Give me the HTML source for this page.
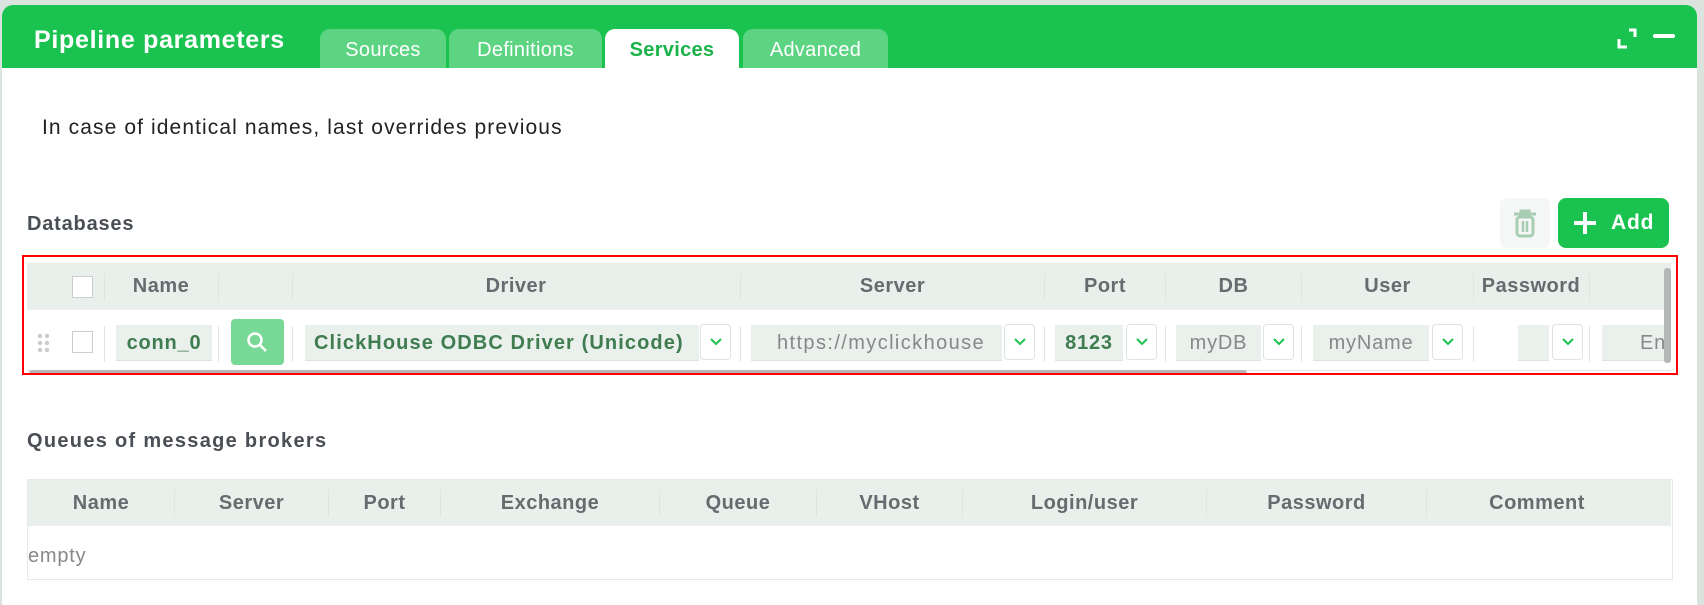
<!DOCTYPE html>
<html><head><meta charset="utf-8"><style>
*{box-sizing:border-box;margin:0;padding:0}
body{width:1704px;height:600px;background:#dbe3de;font-family:"Liberation Sans",sans-serif;position:relative;overflow:hidden;letter-spacing:0.8px}
.a{position:absolute}
#panel{left:2px;top:5px;width:1695px;height:600px;background:#fff;border-radius:11px 11px 0 0;overflow:hidden}
#hdr{left:0;top:0;width:1695px;height:63px;background:#1ac350}
.tab{top:24px;height:39px;background:#5cd482;color:#fff;font-size:20px;text-align:center;line-height:42px;border-radius:10px 10px 0 0;letter-spacing:0.3px}
.tab.on{background:#fff;color:#1ab34a;font-weight:bold}
.th{color:#666b70;font-weight:bold;font-size:20px;text-align:center;top:0;height:47px;line-height:47px;letter-spacing:0.5px}
.sep{width:1px;background:#dfe5e1}
.inp{background:#eaf0ec;height:36px;line-height:36px;font-size:20px;border-bottom:1px solid #dde4df}
.dd{width:31px;height:36px;border:1px solid #dde4df;border-radius:4px;background:#fff}
.dd svg{position:absolute;left:9px;top:12px}
.cb{width:21px;height:22px;border:1px solid #c9cfcc;background:#fff}
.q{color:#666b70;font-weight:bold;font-size:20px;top:0;height:46px;line-height:46px;text-align:center;letter-spacing:0.5px}
</style></head><body>
<div id="panel" class="a">
<div id="hdr" class="a">
 <div class="a" style="left:32px;top:21px;color:#fff;font-weight:bold;font-size:25px;letter-spacing:0.7px">Pipeline parameters</div>
 <div class="a tab" style="left:318px;width:126px">Sources</div>
 <div class="a tab" style="left:447px;width:153px">Definitions</div>
 <div class="a tab on" style="left:603px;width:134px">Services</div>
 <div class="a tab" style="left:741px;width:145px">Advanced</div>
 <svg class="a" style="left:1614px;top:22px" width="24" height="24" viewBox="0 0 24 24"><path d="M3 12v8h8M13 3h6v7" fill="none" stroke="#fff" stroke-width="3"/></svg>
 <div class="a" style="left:1651px;top:29px;width:22px;height:4px;background:#fff;border-radius:2px"></div>
</div>
<div class="a" style="left:40px;top:111px;font-size:21px;color:#222;letter-spacing:1.1px">In case of identical names, last overrides previous</div>
<div class="a" style="left:25px;top:208px;font-size:20px;font-weight:bold;color:#4a4f55">Databases</div>
<div class="a" style="left:1498px;top:193px;width:50px;height:50px;background:#f4f7f5;border-radius:7px">
 <svg class="a" style="left:12px;top:10px" width="26" height="30" viewBox="0 0 26 30"><path d="M2 6h22M9 6V3h8v3" stroke="#a7cdb2" stroke-width="3" fill="none"/><rect x="5" y="9" width="16" height="19" rx="3" fill="none" stroke="#a7cdb2" stroke-width="3"/><path d="M11 13v11M15 13v11" stroke="#a7cdb2" stroke-width="2.5"/></svg>
</div>
<div class="a" style="left:1556px;top:193px;width:111px;height:50px;background:#1ac350;border-radius:8px;color:#fff;font-weight:bold;font-size:21px;line-height:50px">
 <svg class="a" style="left:15px;top:13px" width="24" height="24"><path d="M12 1v22M1 12h22" stroke="#fff" stroke-width="4"/></svg>
 <span class="a" style="left:53px;top:0">Add</span>
</div>
<div class="a" style="left:20px;top:250px;width:1656px;height:120px;border:2px solid #f00"></div>
<div class="a" style="left:25px;top:258px;width:1644px;height:110px;overflow:hidden">
 <div class="a" style="left:0;top:0;width:1644px;height:47px;background:#e9f0eb"></div>
 <div class="a cb" style="left:45px;top:13px"></div>
 <div class="a sep" style="left:77px;top:10px;height:28px"></div>
 <div class="a th" style="left:78px;width:112px">Name</div>
 <div class="a sep" style="left:191px;top:10px;height:28px"></div>
 <div class="a sep" style="left:265px;top:10px;height:28px"></div>
 <div class="a th" style="left:266px;width:446px">Driver</div>
 <div class="a sep" style="left:713px;top:10px;height:28px"></div>
 <div class="a th" style="left:714px;width:303px">Server</div>
 <div class="a sep" style="left:1017px;top:10px;height:28px"></div>
 <div class="a th" style="left:1018px;width:120px">Port</div>
 <div class="a sep" style="left:1138px;top:10px;height:28px"></div>
 <div class="a th" style="left:1139px;width:135px">DB</div>
 <div class="a sep" style="left:1274px;top:10px;height:28px"></div>
 <div class="a th" style="left:1275px;width:171px">User</div>
 <div class="a sep" style="left:1446px;top:10px;height:28px"></div>
 <div class="a th" style="left:1447px;width:114px">Password</div>
 <div class="a sep" style="left:1562px;top:10px;height:28px"></div>
 <svg class="a" style="left:10px;top:70px" width="14" height="20"><g fill="#c9ceca"><circle cx="3" cy="3" r="2.2"/><circle cx="10" cy="3" r="2.2"/><circle cx="3" cy="10" r="2.2"/><circle cx="10" cy="10" r="2.2"/><circle cx="3" cy="17" r="2.2"/><circle cx="10" cy="17" r="2.2"/></g></svg>
 <div class="a cb" style="left:45px;top:68px"></div>
 <div class="a sep" style="left:77px;top:63px;height:36px"></div>
 <div class="a inp" style="left:89px;top:62px;width:96px;color:#3f7d50;font-weight:bold;text-align:center">conn_0</div>
 <div class="a sep" style="left:191px;top:63px;height:36px"></div>
 <div class="a" style="left:204px;top:56px;width:53px;height:46px;background:#78d996;border-radius:4px">
  <svg class="a" style="left:15px;top:12px" width="24" height="24"><circle cx="9" cy="9" r="6.5" fill="none" stroke="#fff" stroke-width="2.5"/><path d="M14 14l6 6" stroke="#fff" stroke-width="2.5"/></svg>
 </div>
 <div class="a sep" style="left:265px;top:63px;height:36px"></div>
 <div class="a inp" style="left:278px;top:62px;width:394px;color:#3f7d50;font-weight:bold;padding-left:9px;letter-spacing:1.1px;white-space:nowrap;overflow:hidden">ClickHouse ODBC Driver (Unicode)</div>
 <div class="a dd" style="left:673px;top:61px"><svg width="12" height="10"><path d="M1 2l5 5 5-5" fill="none" stroke="#1ac350" stroke-width="2"/></svg></div>
 <div class="a sep" style="left:713px;top:63px;height:36px"></div>
 <div class="a inp" style="left:724px;top:62px;width:251px;color:#888;padding-left:26px;overflow:hidden;white-space:nowrap;letter-spacing:1.4px">https://myclickhouse</div>
 <div class="a dd" style="left:977px;top:61px"><svg width="12" height="10"><path d="M1 2l5 5 5-5" fill="none" stroke="#1ac350" stroke-width="2"/></svg></div>
 <div class="a sep" style="left:1017px;top:63px;height:36px"></div>
 <div class="a inp" style="left:1028px;top:62px;width:68px;color:#3f7d50;font-weight:bold;text-align:center">8123</div>
 <div class="a dd" style="left:1099px;top:61px"><svg width="12" height="10"><path d="M1 2l5 5 5-5" fill="none" stroke="#1ac350" stroke-width="2"/></svg></div>
 <div class="a sep" style="left:1138px;top:63px;height:36px"></div>
 <div class="a inp" style="left:1149px;top:62px;width:85px;color:#888;text-align:center">myDB</div>
 <div class="a dd" style="left:1236px;top:61px"><svg width="12" height="10"><path d="M1 2l5 5 5-5" fill="none" stroke="#1ac350" stroke-width="2"/></svg></div>
 <div class="a sep" style="left:1274px;top:63px;height:36px"></div>
 <div class="a inp" style="left:1286px;top:62px;width:116px;color:#888;text-align:center">myName</div>
 <div class="a dd" style="left:1405px;top:61px"><svg width="12" height="10"><path d="M1 2l5 5 5-5" fill="none" stroke="#1ac350" stroke-width="2"/></svg></div>
 <div class="a sep" style="left:1446px;top:63px;height:36px"></div>
 <div class="a inp" style="left:1491px;top:62px;width:31px"></div>
 <div class="a dd" style="left:1525px;top:61px"><svg width="12" height="10"><path d="M1 2l5 5 5-5" fill="none" stroke="#1ac350" stroke-width="2"/></svg></div>
 <div class="a sep" style="left:1562px;top:63px;height:36px"></div>
 <div class="a inp" style="left:1575px;top:62px;width:80px;color:#888;padding-left:38px">En</div>
 <div class="a" style="left:0;top:107px;width:1644px;height:1px;background:#e3e8e5"></div>
 <div class="a" style="left:2px;top:107px;width:1218px;height:6px;background:#b5b8b7;border-radius:3px"></div>
 <div class="a" style="left:1637px;top:5px;width:7px;height:95px;background:#b5b8b7;border-radius:3px"></div>
</div>
<div class="a" style="left:25px;top:425px;font-size:20px;font-weight:bold;color:#4a4f55;letter-spacing:1.3px">Queues of message brokers</div>
<div class="a" style="left:25px;top:474px;width:1646px;height:101px;border:1px solid #e6ebe8">
 <div class="a" style="left:0;top:0;width:1643px;height:46px;background:#e9f0eb"></div>
 <div class="a q" style="left:0;width:146px">Name</div>
 <div class="a sep" style="left:146px;top:10px;height:27px"></div>
 <div class="a q" style="left:147px;width:153px">Server</div>
 <div class="a sep" style="left:300px;top:10px;height:27px"></div>
 <div class="a q" style="left:301px;width:111px">Port</div>
 <div class="a sep" style="left:412px;top:10px;height:27px"></div>
 <div class="a q" style="left:413px;width:218px">Exchange</div>
 <div class="a sep" style="left:631px;top:10px;height:27px"></div>
 <div class="a q" style="left:632px;width:156px">Queue</div>
 <div class="a sep" style="left:788px;top:10px;height:27px"></div>
 <div class="a q" style="left:789px;width:145px">VHost</div>
 <div class="a sep" style="left:934px;top:10px;height:27px"></div>
 <div class="a q" style="left:935px;width:243px">Login/user</div>
 <div class="a sep" style="left:1178px;top:10px;height:27px"></div>
 <div class="a q" style="left:1179px;width:219px">Password</div>
 <div class="a sep" style="left:1398px;top:10px;height:27px"></div>
 <div class="a q" style="left:1399px;width:220px">Comment</div>
 <div class="a" style="left:0;top:65px;font-size:20px;color:#888">empty</div>
</div>
</div>
</body></html>
